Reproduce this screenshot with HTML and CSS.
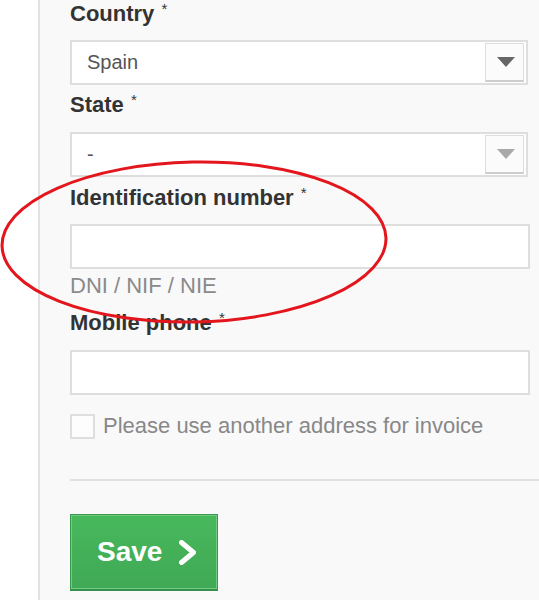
FILE: index.html
```html
<!DOCTYPE html>
<html lang="en">
<head>
<meta charset="utf-8">
<title>Address form</title>
<link rel="stylesheet" href="styles.css">
</head>
<body>
<div class="page">
  <div class="gutter"></div>
  <main class="panel">
    <label class="field-label">Country <span class="req">*</span></label>
    <div class="select select-first">
      <span class="select-value">Spain</span>
      <span class="select-btn"><span class="caret"></span></span>
    </div>

    <label class="field-label label-state">State <span class="req">*</span></label>
    <div class="select select-second">
      <span class="select-value">-</span>
      <span class="select-btn"><span class="caret caret-light"></span></span>
    </div>

    <label class="field-label label-id">Identification number <span class="req">*</span></label>
    <input class="text-input input-id" type="text">
    <div class="hint">DNI / NIF / NIE</div>

    <label class="field-label label-phone">Mobile phone <span class="req">*</span></label>
    <input class="text-input input-phone" type="text">

    <div class="check-row">
      <span class="checkbox"></span>
      <span class="check-text">Please use another address for invoice</span>
    </div>

    <div class="divider"></div>

    <button class="save-btn" type="button">
      <span class="save-text">Save</span>
      <svg class="chevron" width="17" height="25" viewBox="0 0 17 25">
        <path d="M2.5 2.5 L14.5 12.5 L2.5 22.5" fill="none" stroke="#ffffff" stroke-width="5" stroke-linecap="round" stroke-linejoin="round"/>
      </svg>
    </button>
  </main>

  <svg class="annotation" width="539" height="600" viewBox="0 0 539 600">
    <ellipse cx="194" cy="242" rx="192" ry="80" transform="rotate(-1.2 194 242)" fill="none" stroke="#e3151d" stroke-width="3"/>
  </svg>
</div>
</body>
</html>
```

FILE: styles.css
```css
html, body {
  margin: 0;
  padding: 0;
}

body {
  font-family: "Liberation Sans", Arial, sans-serif;
  background: #ffffff;
  color: #333333;
}

.page {
  position: relative;
  display: flex;
  min-height: 600px;
  overflow: hidden;
}

.gutter {
  width: 38px;
  flex: none;
  background: #ffffff;
}

.panel {
  flex: 1;
  background: #f9f9f9;
  border-left: 2px solid #e2e2e2;
  padding: 1px 0 0 30px;
  display: flex;
  flex-direction: column;
  align-items: flex-start;
}

.field-label {
  display: block;
  font-size: 22px;
  font-weight: bold;
  line-height: 26px;
  height: 26px;
  color: #333333;
  white-space: nowrap;
}

.req {
  font-size: 15px;
  font-weight: normal;
  line-height: 15px;
  vertical-align: top;
  margin-left: 1px;
}

.label-state { margin-top: 7px; }
.label-id { margin-top: 8px; }
.label-phone { margin-top: 11px; }

.select {
  box-sizing: border-box;
  width: 458px;
  height: 45px;
  border: 2px solid #dedede;
  background: #ffffff;
  display: flex;
  align-items: center;
  justify-content: space-between;
  padding: 0 2px 0 15px;
}

.select-first { margin-top: 13px; }
.select-second { margin-top: 14px; }

.select-value {
  font-size: 20px;
  color: #555555;
}

.select-btn {
  box-sizing: border-box;
  width: 39px;
  height: 39px;
  border: 1px solid #dddddd;
  border-bottom: 2px solid #cdcdcd;
  background: #fbfbfb;
  display: flex;
  align-items: center;
  justify-content: center;
}

.caret {
  width: 0;
  height: 0;
  margin-left: 2px;
  border-left: 9px solid transparent;
  border-right: 9px solid transparent;
  border-top: 10px solid #666666;
}

.caret-light {
  border-top-color: #a9a9a9;
}

.text-input {
  display: block;
  box-sizing: border-box;
  width: 460px;
  height: 45px;
  margin: 13px 0 0 0;
  padding: 0 15px;
  border: 2px solid #dedede;
  border-radius: 0;
  background: #ffffff;
  font-family: inherit;
  font-size: 20px;
  outline: none;
}

.input-phone { margin-top: 14px; }

.hint {
  margin-top: 4px;
  font-size: 22px;
  line-height: 26px;
  color: #8a8a8a;
}

.check-row {
  margin-top: 18px;
  display: flex;
  align-items: center;
  gap: 8px;
}

.checkbox {
  box-sizing: border-box;
  width: 25px;
  height: 25px;
  border: 2px solid #dedede;
  background: #fdfdfd;
}

.check-text {
  font-size: 22px;
  line-height: 26px;
  color: #888888;
}

.divider {
  align-self: stretch;
  margin-top: 40px;
  height: 0;
  border-top: 2px solid #e0e0e0;
}

.save-btn {
  margin-top: 33px;
  box-sizing: border-box;
  width: 148px;
  height: 77px;
  padding: 0 0 0 26px;
  display: flex;
  align-items: center;
  gap: 17px;
  border: 1px solid #3a9a4e;
  border-bottom: 2px solid #34904a;
  box-shadow: inset 0 0 0 1px #72c982;
  background: linear-gradient(#47b85c, #40a955);
  color: #ffffff;
  font-family: inherit;
  cursor: pointer;
}

.save-text {
  font-size: 28px;
  font-weight: bold;
  line-height: 30px;
}

.chevron {
  display: block;
  flex: none;
}

.annotation {
  position: absolute;
  left: 0;
  top: 0;
  pointer-events: none;
}
```
